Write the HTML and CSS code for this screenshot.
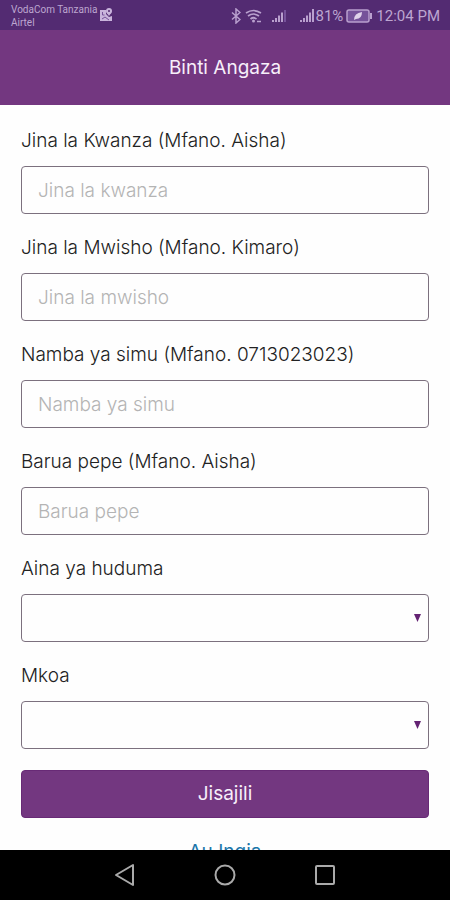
FILE: index.html
```html
<!DOCTYPE html>
<html lang="sw">
<head>
<meta charset="utf-8">
<meta name="viewport" content="width=device-width, initial-scale=1">
<title>Binti Angaza</title>
<link rel="stylesheet" href="styles.css">
</head>
<body>
<div class="status">
  <div class="carriers"><span>VodaCom Tanzania</span><span>Airtel</span></div>
  <svg class="map" width="14" height="16" viewBox="0 0 14 16" aria-hidden="true">
    <path fill="#c9b4dc" d="M1 3h6v4l3 3 3-1v5H1z"/>
    <circle cx="10" cy="4" r="3" fill="#c9b4dc"/><path fill="#c9b4dc" d="M7.500 5.500h5L10 9z"/>
    <circle cx="10" cy="4" r="1" fill="#532b72"/>
    <path d="M3 12l3-2 4 3M3.500 5v3h2" fill="none" stroke="#76529a"/>
  </svg>
  <div class="indicators">
    <svg width="10" height="16" viewBox="0 0 10 16" aria-hidden="true"><path d="M1 4.500l8 7L5 15V1l4 3.500-8 7" fill="none" stroke="#b9a0ce" stroke-width="1.500"/></svg>
    <svg class="wifi" width="18" height="16" viewBox="0 0 18 16" aria-hidden="true"><path d="M1 5q7.500-5 15 0M3 8q5.500-4 11 0M5.500 11q3-2.500 6 0M12 13.500h4" fill="none" stroke="#b9a0ce" stroke-width="1.700"/><circle cx="8.500" cy="13" r="1.500" fill="#b9a0ce"/></svg>
    <svg class="signal" width="16" height="16" viewBox="0 0 16 16" aria-hidden="true"><path d="M2 12v2M5 10v4M8 7.500V14M11 4.500V14" stroke="#b9a0ce" stroke-width="2"/><path d="M14 2v12" stroke="#76529a" stroke-width="2"/></svg>
    <svg width="16" height="16" viewBox="0 0 16 16" aria-hidden="true"><path d="M2 12v2M5 10v4M8 7.500V14M11 4.500V14M14 1v13" stroke="#b9a0ce" stroke-width="2"/></svg>
    <span>81%</span>
    <svg class="battery" width="26" height="14" viewBox="0 0 26 14" aria-hidden="true"><rect x="1" y="1" width="22" height="12" rx="2" fill="#76529a" stroke="#b9a0ce" stroke-width="1.500"/><path d="M25 4v6" stroke="#b9a0ce" stroke-width="2"/><path d="M8 11q0-7 8-8 0 7-6 7z" fill="#e0d2ea"/></svg>
    <time>12:04 PM</time>
  </div>
</div>
<header class="header"><h1>Binti Angaza</h1></header>
<main class="main">
  <form class="form">
    <div class="field"><label for="first">Jina la Kwanza (Mfano. Aisha)</label><input class="control" id="first" type="text" placeholder="Jina la kwanza"></div>
    <div class="field"><label for="last">Jina la Mwisho (Mfano. Kimaro)</label><input class="control" id="last" type="text" placeholder="Jina la mwisho"></div>
    <div class="field"><label for="phone">Namba ya simu (Mfano. 0713023023)</label><input class="control" id="phone" type="tel" placeholder="Namba ya simu"></div>
    <div class="field"><label for="email">Barua pepe (Mfano. Aisha)</label><input class="control" id="email" type="text" placeholder="Barua pepe"></div>
    <div class="field"><label for="service">Aina ya huduma</label><select class="control select" id="service"><option></option></select></div>
    <div class="field"><label for="region">Mkoa</label><select class="control select" id="region"><option></option></select></div>
    <button class="submit" type="submit">Jisajili</button>
    <a class="login" href="#login">Au Ingia</a>
  </form>
</main>
<nav class="nav" aria-label="Android">
  <button type="button" aria-label="Back"><svg width="24" height="24" viewBox="0 0 24 24"><path d="M3 12L20 2v20z" fill="none" stroke="#aaa" stroke-width="2" stroke-linejoin="round"/></svg></button>
  <button type="button" aria-label="Home"><svg width="24" height="24" viewBox="0 0 24 24"><circle cx="12" cy="12" r="9.500" fill="none" stroke="#aaa" stroke-width="2"/></svg></button>
  <button type="button" aria-label="Recent"><svg width="24" height="24" viewBox="0 0 24 24"><rect x="3" y="3" width="18" height="18" rx="1" fill="none" stroke="#aaa" stroke-width="2"/></svg></button>
</nav>
</body>
</html>
```
FILE: styles.css
```css
* { box-sizing: border-box; }
body {
  margin: 0;
  height: 100vh;
  display: flex;
  flex-direction: column;
  background: #fefefe;
  color: #222;
  font-family: Inter, "Open Sans", sans-serif;
  font-size: 19px;
  line-height: 26px;
}
.status {
  flex: none;
  height: 30px;
  display: flex;
  align-items: center;
  padding: 0 10px 0 11px;
  background: #532b72;
  color: #bda6d0;
  font-family: Roboto, sans-serif;
}
.carriers { display: flex; flex-direction: column; font-size: 10px; line-height: 13px; padding-top: 2px; }
.map { margin-left: 2px; }
.indicators { display: flex; align-items: center; margin-left: auto; padding-top: 2px; font-size: 15px; line-height: 20px; }
.wifi { margin-left: 4px; }
.signal { margin: 0 12px 0 8px; }
.indicators span { margin-left: 1px; }
.battery { margin: 0 4px 0 3px; }
.header {
  flex: none;
  height: 75px;
  display: flex;
  align-items: center;
  justify-content: center;
  background: #733780;
  color: #f7effa;
}
.header h1 { margin: 0; font-size: 19px; font-weight: 400; }
.main { flex: 1; min-height: 0; overflow-y: auto; scrollbar-width: none; }
.form { display: flex; flex-direction: column; gap: 21px; padding: 23px 21px; }
.field { display: flex; flex-direction: column; gap: 12px; }
.field label { font-weight: 300; }
.control {
  width: 100%;
  height: 48px;
  padding: 0 16px;
  border: 1px solid #7c707e;
  border-radius: 4px;
  background: #fefefe;
  color: #222;
  font: inherit;
  font-weight: 300;
}
.control::placeholder { color: #b4b4b4; opacity: 1; }
.select {
  appearance: none;
  background: #fefefe url("data:image/svg+xml,%3Csvg xmlns='http://www.w3.org/2000/svg' width='7' height='8'%3E%3Cpath d='M0 0h7L3.5 8z' fill='%23642373'/%3E%3C/svg%3E") no-repeat right 7px center;
}
.submit {
  height: 48px;
  border: 1px solid #682a76;
  border-radius: 4px;
  background: #733780;
  color: #f7effa;
  font: inherit;
}
.login { align-self: center; color: #1c76aa; text-decoration: none; }
.nav {
  flex: none;
  height: 50px;
  display: flex;
  justify-content: center;
  align-items: center;
  gap: 76px;
  background: #000;
}
.nav button { display: flex; padding: 0; border: 0; background: none; }
```
